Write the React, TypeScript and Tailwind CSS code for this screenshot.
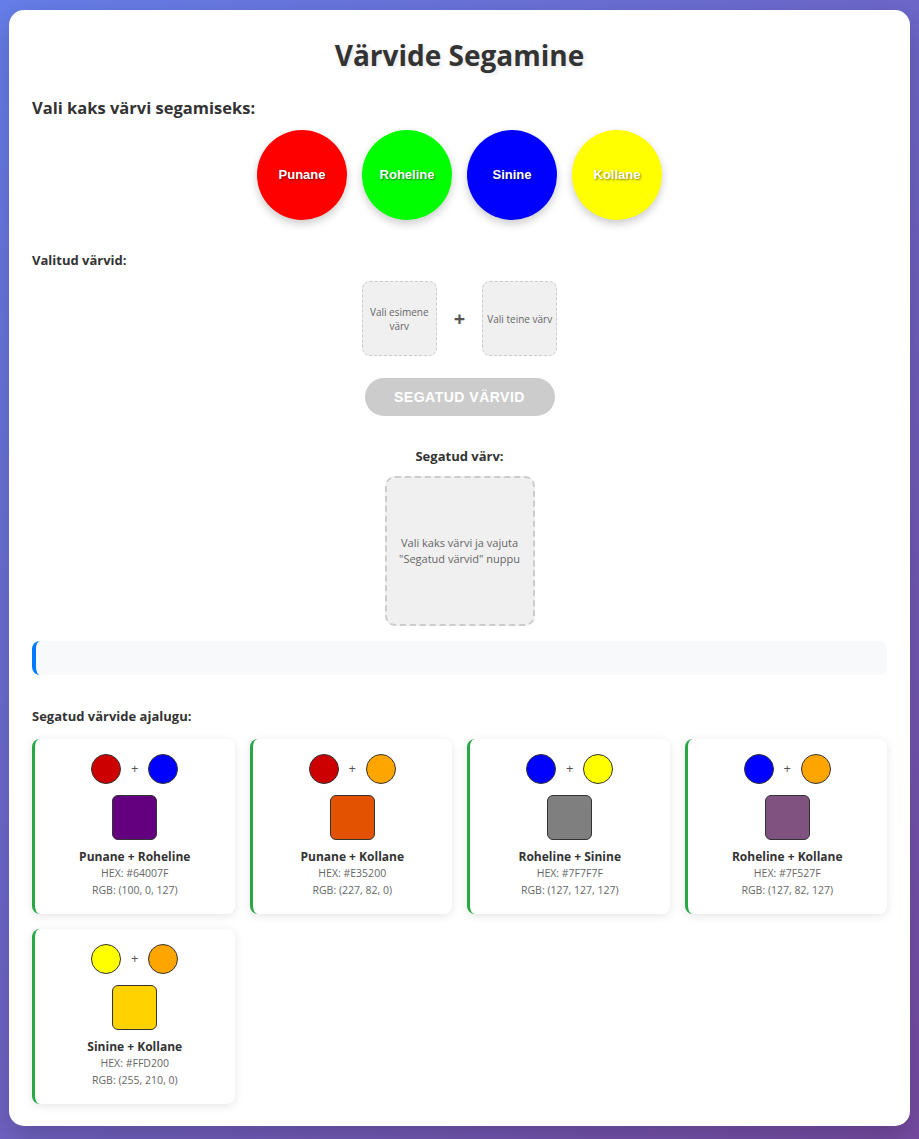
import React from 'react';

interface HistoryItem {
  a: string;
  b: string;
  mix: string;
  name: string;
  hex: string;
  rgb: string;
}

const baseColors = [
  { name: 'Punane', color: '#ff0000' },
  { name: 'Roheline', color: '#00ff00' },
  { name: 'Sinine', color: '#0000ff' },
  { name: 'Kollane', color: '#ffff00' },
];

const history: HistoryItem[] = [
  { a: '#cc0000', b: '#0000ff', mix: '#64007f', name: 'Punane + Roheline', hex: '#64007F', rgb: '(100, 0, 127)' },
  { a: '#cc0000', b: '#ffa500', mix: '#e35200', name: 'Punane + Kollane', hex: '#E35200', rgb: '(227, 82, 0)' },
  { a: '#0000ff', b: '#ffff00', mix: '#7f7f7f', name: 'Roheline + Sinine', hex: '#7F7F7F', rgb: '(127, 127, 127)' },
  { a: '#0000ff', b: '#ffa500', mix: '#7f527f', name: 'Roheline + Kollane', hex: '#7F527F', rgb: '(127, 82, 127)' },
  { a: '#ffff00', b: '#ffa500', mix: '#ffd200', name: 'Sinine + Kollane', hex: '#FFD200', rgb: '(255, 210, 0)' },
];

const HistoryCard: React.FC<{ item: HistoryItem }> = ({ item }) => (
  <div className="bg-white rounded-lg border-l-[3px] border-[#28a745] shadow-[0_2px_10px_rgba(0,0,0,0.1)] pt-[15px] pb-[15px] flex flex-col items-center">
    <div className="flex items-center gap-[10px]">
      <div className="w-[30px] h-[30px] rounded-full border border-[#333]" style={{ backgroundColor: item.a }} />
      <span className="text-[13px] text-[#555]">+</span>
      <div className="w-[30px] h-[30px] rounded-full border border-[#333]" style={{ backgroundColor: item.b }} />
    </div>
    <div className="mt-[11px] w-[45px] h-[45px] rounded-md border border-[#333]" style={{ backgroundColor: item.mix }} />
    <div className="mt-[8px] text-[12px] font-bold text-[#333] leading-[17px]">{item.name}</div>
    <div className="text-[10.5px] text-[#666] leading-[17px]">HEX: {item.hex}</div>
    <div className="text-[10.5px] text-[#666] leading-[17px]">RGB: {item.rgb}</div>
  </div>
);

export default function App() {
  return (
    <div
      className="min-h-[1139px] bg-[linear-gradient(135deg,#667eea_0%,#764ba2_100%)] pt-[10px] pb-[14px] px-[9px]"
      style={{ fontFamily: '"Open Sans", "Noto Sans", sans-serif' }}
    >
      <div className="bg-white rounded-[15px] shadow-[0_10px_30px_rgba(0,0,0,0.2)] px-[23px] pt-[26px] pb-[22px]">
        <h1 className="text-center text-[28px] font-bold text-[#333] leading-[38px] [text-shadow:2px_2px_4px_rgba(0,0,0,0.1)]">
          Värvide Segamine
        </h1>

        <h2 className="mt-[22px] text-[16.5px] font-bold text-[#333] leading-[24px]">Vali kaks värvi segamiseks:</h2>

        <div className="mt-[10px] flex justify-center gap-[15px]">
          {baseColors.map((c) => (
            <div
              key={c.name}
              className="w-[90px] h-[90px] rounded-full flex items-center justify-center shadow-[0_4px_8px_rgba(0,0,0,0.2)] text-white font-bold text-[13px] [text-shadow:1px_1px_2px_rgba(0,0,0,0.5)]"
              style={{ backgroundColor: c.color, fontFamily: '"Liberation Sans", Arial, sans-serif' }}
            >
              {c.name}
            </div>
          ))}
        </div>

        <h3 className="mt-[30px] text-[13px] font-bold text-[#333] leading-[20px]">Valitud värvid:</h3>

        <div className="mt-[11px] flex justify-center items-center gap-[17px]">
          <div className="w-[75px] h-[75px] rounded-lg border border-dashed border-[#ccc] bg-[#f0f0f0] flex items-center justify-center text-center text-[10px] text-[#666] leading-[14px] px-1">
            Vali esimene värv
          </div>
          <span className="text-[20px] font-bold text-[#555] leading-none">+</span>
          <div className="w-[75px] h-[75px] rounded-lg border border-dashed border-[#ccc] bg-[#f0f0f0] flex items-center justify-center text-center text-[10px] text-[#666] leading-[14px]">
            Vali teine värv
          </div>
        </div>

        <div className="mt-[22px] flex justify-center">
          <button
            className="w-[190px] h-[38px] rounded-full bg-[#ccc] text-white font-bold text-[14px] uppercase tracking-[0.5px]"
            style={{ fontFamily: '"Liberation Sans", Arial, sans-serif' }}
          >
            Segatud värvid
          </button>
        </div>

        <div className="mt-[30px] text-center text-[13px] font-bold text-[#333] leading-[20px]">Segatud värv:</div>

        <div className="mt-[10px] flex justify-center">
          <div className="w-[150px] h-[150px] rounded-[10px] border-2 border-dashed border-[#ccc] bg-[#f0f0f0] flex items-center justify-center text-center text-[11px] text-[#666] leading-[16px] px-2">
            Vali kaks värvi ja vajuta "Segatud värvid" nuppu
          </div>
        </div>

        <div className="mt-[15px] h-[34px] bg-[#f8f9fa] rounded-lg border-l-4 border-[#007bff]" />

        <h3 className="mt-[31px] text-[13px] font-bold text-[#333] leading-[20px]">Segatud värvide ajalugu:</h3>

        <div className="mt-[13px] grid grid-cols-4 gap-[15px]">
          {history.map((h) => (
            <HistoryCard key={h.name} item={h} />
          ))}
        </div>
      </div>
    </div>
  );
}
